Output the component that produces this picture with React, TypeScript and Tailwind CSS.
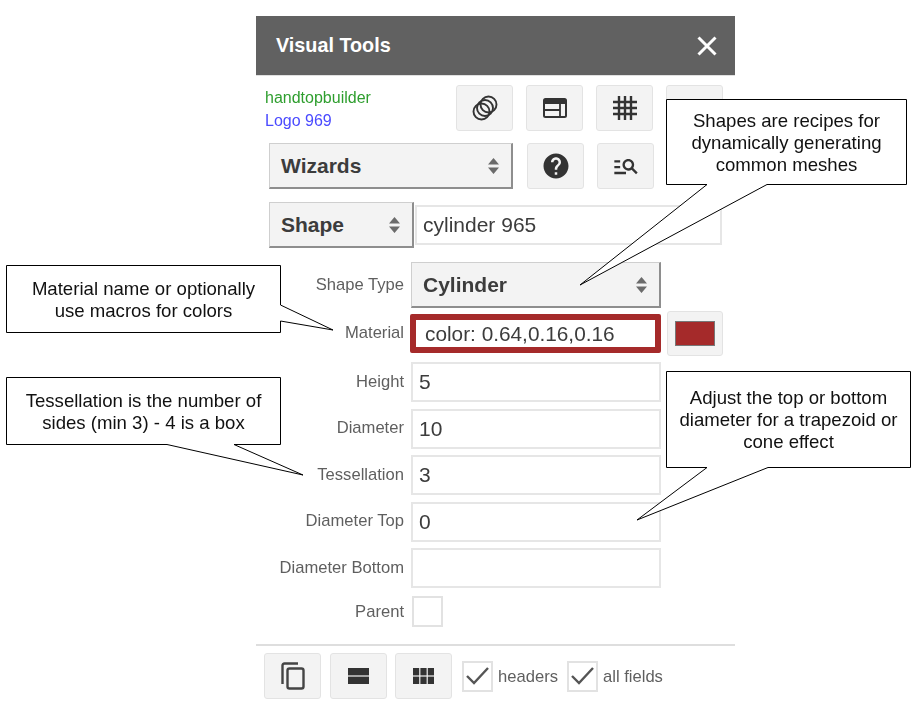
import { MdHelp, MdManageSearch } from "react-icons/md";
import type { ReactNode } from "react";

const panelFont = "font-['Liberation_Sans',Arial,sans-serif]";

function IconButton({ children, className = "w-[57px] h-[46px]" }: { children?: ReactNode; className?: string }) {
  return (
    <button className={`flex items-center justify-center rounded-[3px] border border-[#e3e3e3] bg-[#f3f3f3] text-[#333] ${className}`}>
      {children}
    </button>
  );
}

function Arrows() {
  return (
    <svg width="13" height="18" viewBox="0 0 13 18" className="shrink-0">
      <path d="M6.5 1 L12 7.5 H1 Z M1 10.5 H12 L6.5 17 Z" fill="#6b6b6b" />
    </svg>
  );
}

function Select({ label, className }: { label: string; className: string }) {
  return (
    <div className={`flex items-center justify-between border border-[#cfcfcf] border-r-2 border-b-2 border-r-[#8e8e8e] border-b-[#8e8e8e] bg-[#f3f3f3] pl-[11px] pr-[11px] text-[21px] font-bold text-[#3c3c3c] ${className}`}>
      <span>{label}</span>
      <Arrows />
    </div>
  );
}

function Field({ label, value = "" }: { label: string; value?: string }) {
  return (
    <div className="flex items-center">
      <label className="w-[148px] text-right text-[16.6px] text-[#5f5f5f]">{label}</label>
      <div className="ml-[7px] flex h-[40px] w-[250px] items-center border-2 border-[#e6e6e6] bg-white pl-[6px] text-[21px] text-[#3c3c3c]">
        {value}
      </div>
    </div>
  );
}

function Check({ label }: { label: string }) {
  return (
    <div className="flex items-center">
      <div className="flex h-[31px] w-[31px] items-center justify-center border-2 border-[#e2e2e2] bg-white">
        <svg width="25" height="20" viewBox="0 0 25 20" fill="none">
          <path d="M2 10 L9 17 L23 2" stroke="#555" strokeWidth="2.4" />
        </svg>
      </div>
      <span className="ml-[5px] pt-[2px] text-[16.6px] text-[#5f5f5f]">{label}</span>
    </div>
  );
}

function Callout({ x, y, w, h, d, dy = 0, lines }: { x: number; y: number; w: number; h: number; d: string; dy?: number; lines: string[] }) {
  return (
    <>
      <svg width="923" height="709" className="pointer-events-none absolute left-0 top-0">
        <path d={d} fill="white" stroke="black" strokeWidth="1" />
      </svg>
      <div
        className="absolute flex flex-col items-center justify-center text-center text-[18.6px] leading-[22px] text-[#111] blur-[0.3px] font-['Liberation_Sans',Arial,sans-serif]"
        style={{ left: x, top: y + dy, width: w, height: h }}
      >
        {lines.map((l) => (
          <div key={l}>{l}</div>
        ))}
      </div>
    </>
  );
}

export default function App() {
  return (
    <div className={`relative h-[709px] w-[923px] overflow-hidden bg-white ${panelFont}`}>
      <div className="ml-[256px] w-[479px] pt-[16px] blur-[0.5px]">
        <div className="flex h-[60px] items-center justify-between border-b border-[#e0e0e0] bg-[#616161] pl-[20px] pr-[18px] text-white">
          <span className="text-[19.8px] font-bold">Visual Tools</span>
          <svg width="20" height="20" viewBox="0 0 20 20" stroke="white" strokeWidth="3">
            <path d="M1.5 1.5 L18.5 18.5 M18.5 1.5 L1.5 18.5" />
          </svg>
        </div>

        <div className="mt-[9px] flex h-[46px]">
          <div className="w-[200px] pl-[9px] pt-[1px] text-[16px] leading-[23px]">
            <div className="text-[#2e9e2e]">handtopbuilder</div>
            <div className="text-[#4a4aff]">Logo 969</div>
          </div>
          <div className="flex gap-[13px]">
            <IconButton>
              <svg width="26" height="26" viewBox="0 0 26 26" fill="none" stroke="#333" strokeWidth="1.9">
                <circle cx="9.5" cy="16.5" r="8" />
                <circle cx="13" cy="13" r="8" />
                <circle cx="16.5" cy="9.5" r="8" />
              </svg>
            </IconButton>
            <IconButton>
              <svg width="24" height="20" viewBox="0 0 24 20" fill="none">
                <rect x="1" y="1" width="22" height="18" rx="1.5" stroke="#333" strokeWidth="2" />
                <rect x="1" y="1" width="22" height="5" fill="#333" />
                <path d="M17 6 V19 M1 12 H17" stroke="#333" strokeWidth="1.8" />
              </svg>
            </IconButton>
            <IconButton>
              <svg width="26" height="26" viewBox="0 0 26 26" fill="none" stroke="#333" strokeWidth="2.4">
                <path d="M7 1 V25 M13 1 V25 M19 1 V25 M1 7 H25 M1 13 H25 M1 19 H25" />
              </svg>
            </IconButton>
            <IconButton>
              <svg width="20" height="22" viewBox="0 0 20 22" fill="none" className="mt-[3px]">
                <rect x="1" y="1" width="18" height="20" rx="2" stroke="#555" strokeWidth="2" />
              </svg>
            </IconButton>
          </div>
        </div>

        <div className="ml-[13px] mt-[12px] flex gap-[14px]">
          <Select label="Wizards" className="h-[46px] w-[244px]" />
          <div className="flex gap-[13px]">
            <IconButton>
              <MdHelp size={30} />
            </IconButton>
            <IconButton>
              <MdManageSearch size={28} />
            </IconButton>
          </div>
        </div>

        <div className="ml-[13px] mt-[13px] flex items-center">
          <Select label="Shape" className="h-[46px] w-[145px]" />
          <div className="ml-[1px] flex h-[40px] w-[307px] items-center border-2 border-[#e6e6e6] bg-white pl-[6px] text-[21px] text-[#3c3c3c]">
            cylinder 965
          </div>
        </div>

        <div className="mt-[14px] flex items-center">
          <label className="w-[148px] text-right text-[16.6px] text-[#5f5f5f]">Shape Type</label>
          <Select label="Cylinder" className="ml-[7px] h-[46px] w-[250px]" />
        </div>

        <div className="mt-[3px] flex items-center">
          <label className="w-[148px] text-right text-[16.6px] text-[#5f5f5f]">Material</label>
          <div className="ml-[6px] flex h-[39px] w-[251px] items-center rounded-[2px] border-[6px] border-[#a52a2a] bg-white pl-[9px] text-[20.8px] text-[#3c3c3c]">
            color: 0.64,0.16,0.16
          </div>
          <IconButton className="ml-[6px] h-[45px] w-[56px] border-[#cfcfcf]">
            <div className="h-[25px] w-[40px] border border-[#777] bg-[#a52a2a]" />
          </IconButton>
        </div>

        <div className="mt-[6px] flex flex-col gap-[6.5px]">
          <Field label="Height" value="5" />
          <Field label="Diameter" value="10" />
          <Field label="Tessellation" value="3" />
          <Field label="Diameter Top" value="0" />
          <Field label="Diameter Bottom" />
        </div>

        <div className="mt-[8px] flex items-center">
          <label className="w-[148px] pt-[1px] text-right text-[16.6px] text-[#5f5f5f]">Parent</label>
          <div className="ml-[8px] h-[31px] w-[31px] border-2 border-[#e2e2e2] bg-white" />
        </div>

        <div className="mt-[17px] border-t-2 border-[#dedede]" />

        <div className="ml-[8px] mt-[7px] flex items-center">
          <div className="flex gap-[8.5px]">
            <IconButton>
              <svg width="24" height="28" viewBox="0 0 24 28" fill="none" stroke="#444" strokeWidth="2.4">
                <rect x="6.5" y="6.5" width="16" height="20" rx="2" />
                <path d="M1.5 22 V3.5 Q1.5 1.5 3.5 1.5 H17" />
              </svg>
            </IconButton>
            <IconButton>
              <svg width="21" height="16" viewBox="0 0 21 16" fill="#333">
                <rect width="21" height="7.4" />
                <rect y="8.6" width="21" height="7.4" />
              </svg>
            </IconButton>
            <IconButton>
              <svg width="21" height="16" viewBox="0 0 21 16" fill="#333">
                <rect width="6.2" height="7.4" />
                <rect x="7.4" width="6.2" height="7.4" />
                <rect x="14.8" width="6.2" height="7.4" />
                <rect y="8.6" width="6.2" height="7.4" />
                <rect x="7.4" y="8.6" width="6.2" height="7.4" />
                <rect x="14.8" y="8.6" width="6.2" height="7.4" />
              </svg>
            </IconButton>
          </div>
          <div className="ml-[10px] flex gap-[9px]">
            <Check label="headers" />
            <Check label="all fields" />
          </div>
        </div>
      </div>

      <Callout
        x={666}
        y={99}
        w={241}
        h={86}
        dy={1}
        d="M666.5 99.5 H906.5 V184.5 H767 L580 285 L707 184.5 H666.5 Z"
        lines={["Shapes are recipes for", "dynamically generating", "common meshes"]}
      />
      <Callout
        x={6}
        y={265}
        w={275}
        h={68}
        dy={1}
        d="M6.5 265.5 H280.5 V305 L333 330 L280.5 321 V332.5 H6.5 Z"
        lines={["Material name or optionally", "use macros for colors"]}
      />
      <Callout
        x={6}
        y={377}
        w={275}
        h={68}
        dy={1}
        d="M6.5 377.5 H280.5 V444.5 H234 L303 475 L167 444.5 H6.5 Z"
        lines={["Tessellation is the number of", "sides (min 3) - 4 is a box"]}
      />
      <Callout
        x={666}
        y={371}
        w={245}
        h={97}
        d="M666.5 371.5 H910.5 V467.5 H768 L637 520 L707 467.5 H666.5 Z"
        lines={["Adjust the top or bottom", "diameter for a trapezoid or", "cone effect"]}
      />
    </div>
  );
}
